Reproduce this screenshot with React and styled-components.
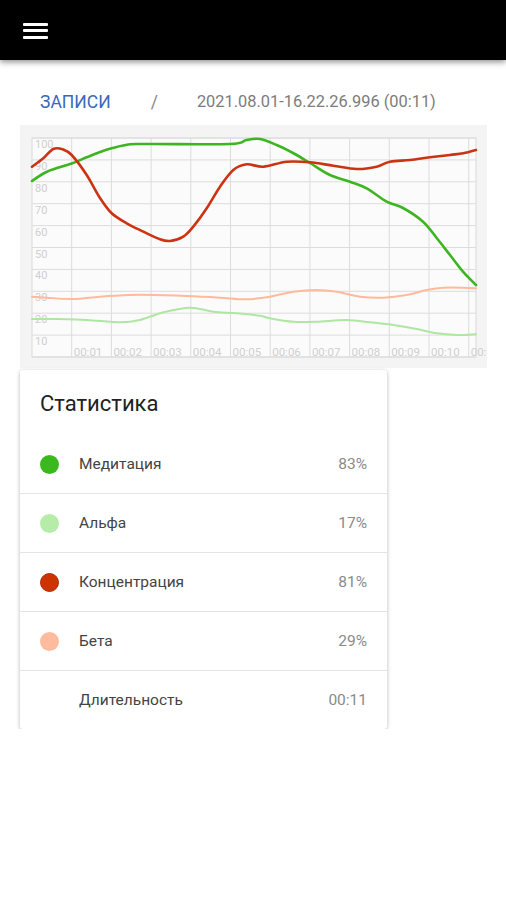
import React from "react"
import { styled, createGlobalStyle } from "styled-components"

const GlobalStyle = createGlobalStyle`
  body {
    margin: 0;
    background: #fff;
    font-family: Roboto, "Liberation Sans", sans-serif;
  }
`

// chart series, page coordinates
const series = [
  {
    color: "#ffb99b",
    width: 2,
    points: [[32,296.7],[46.7,297.7],[73.3,299],[100,296.7],[130,295],[153.3,295],[186.7,296],[220,297.7],[246.7,299.3],[270,296.7],[293.3,291.7],[316.7,290],[336.7,291.7],[360,296.7],[383.3,297.7],[406.7,295],[426.7,290],[443.3,287.7],[463.3,287.7],[476,288.3]],
  },
  {
    color: "#aee6a2",
    width: 2,
    points: [[32,319],[53.3,319],[86.7,320],[120,322.3],[140,320],[163.3,312.3],[190,307.7],[213.3,311.7],[236.7,313.3],[260,315.7],[270,318.3],[293.3,321.7],[316.7,321.7],[346.7,320],[370,322.3],[393.3,325],[416.7,329],[436.7,333.3],[456.7,335],[476,334.3]],
  },
  {
    color: "#3db521",
    width: 2.6,
    points: [[32,181],[47,171.7],[71.7,163.5],[86.7,157.3],[100,152],[111.7,148.3],[130,144.3],[150,144],[230,144],[246.7,140],[260,139],[276.7,145],[293,153],[310,163],[330,175],[350,181.7],[366.7,188.3],[386.7,201.7],[403,208],[423,221.7],[436.7,238],[450,255],[463,271.7],[476,285]],
  },
  {
    color: "#cc3311",
    width: 2.6,
    points: [[32,166.7],[43.3,158.3],[53.3,149],[63.3,149.5],[71.7,155],[86.7,175],[100,198],[111.7,213.3],[126.7,223.3],[143.3,231.7],[160,239.3],[170,241],[183.3,236.7],[193.3,226.7],[206.7,208.3],[220,186.7],[233.3,170],[246.7,164.3],[263.3,166.7],[286.7,161.7],[310,162.3],[333.3,165.7],[356.7,169],[376.7,166.7],[390,161.7],[410,160],[430,157.3],[450,155],[463.3,153.3],[476,150]],
  },
]

const stats = [
  { label: "Медитация", value: "83%", color: "#3cb81f" },
  { label: "Альфа", value: "17%", color: "#b5eca8" },
  { label: "Концентрация", value: "81%", color: "#cc3300", border: "#b02a08" },
  { label: "Бета", value: "29%", color: "#ffbb9d" },
  { label: "Длительность", value: "00:11" },
]

// catmull-rom -> cubic bezier
const smoothPath = (pts) => {
  let d = `M${pts[0][0]},${pts[0][1]}`
  for (let i = 0; i < pts.length - 1; i++) {
    const p0 = pts[i - 1] || pts[i]
    const p1 = pts[i]
    const p2 = pts[i + 1]
    const p3 = pts[i + 2] || p2
    const c1x = p1[0] + (p2[0] - p0[0]) / 6
    const c1y = p1[1] + (p2[1] - p0[1]) / 6
    const c2x = p2[0] - (p3[0] - p1[0]) / 6
    const c2y = p2[1] - (p3[1] - p1[1]) / 6
    d += ` C${c1x.toFixed(1)},${c1y.toFixed(1)} ${c2x.toFixed(1)},${c2y.toFixed(1)} ${p2[0]},${p2[1]}`
  }
  return d
}

const PLOT = { left: 32, top: 138, right: 476, bottom: 357 }
const COL = 39.7
const ROW = (PLOT.bottom - PLOT.top) / 10

const Chart = () => {
  const rows = []
  for (let i = 0; i <= 10; i++) rows.push(PLOT.top + i * ROW)
  const cols = []
  for (let i = 1; i <= 11; i++) cols.push(PLOT.left + i * COL)

  return (
    <svg width="467" height="243" viewBox="20 125 467 243">
      <rect x={PLOT.left} y={PLOT.top} width={PLOT.right - PLOT.left} height={PLOT.bottom - PLOT.top} fill="#fbfbfb" stroke="#d9d9d9" />
      {rows.map((y) => (
        <line key={y} x1={PLOT.left} x2={PLOT.right} y1={y} y2={y} stroke="#dcdcdc" strokeWidth="1" />
      ))}
      {cols.map((x) => (
        <line key={x} x1={x} x2={x} y1={PLOT.top} y2={PLOT.bottom} stroke="#dcdcdc" strokeWidth="1" />
      ))}
      {rows.slice(0, 10).map((y, i) => (
        <text key={i} x={PLOT.left + 3} y={y + 10} fontSize="11" fill="#cfcfcf" fontFamily="Roboto, sans-serif">
          {100 - i * 10}
        </text>
      ))}
      {cols.map((x, i) => (
        <text key={i} x={x + 2} y={PLOT.bottom - 1} fontSize="11.5" fill="#cfcfcf" fontFamily="Roboto, sans-serif">
          {`00:${String(i + 1).padStart(2, "0")}`}
        </text>
      ))}
      {series.map((s, i) => (
        <path key={i} d={smoothPath(s.points)} fill="none" stroke={s.color} strokeWidth={s.width} strokeLinejoin="round" strokeLinecap="round" />
      ))}
    </svg>
  )
}

const App = () => {
  return (
    <>
      <GlobalStyle />
      <Header>
        <MenuButton>
          <Bar />
          <Bar />
          <Bar />
        </MenuButton>
      </Header>

      <Breadcrumbs>
        <Crumb href="#">Записи</Crumb>
        <Slash>/</Slash>
        <Current>2021.08.01-16.22.26.996 (00:11)</Current>
      </Breadcrumbs>

      <ChartPanel>
        <Chart />
      </ChartPanel>

      <Card>
        <CardTitle>Статистика</CardTitle>
        {stats.map((s) => (
          <StatRow key={s.label}>
            <Dot color={s.color} border={s.border} />
            <StatLabel>{s.label}</StatLabel>
            <StatValue>{s.value}</StatValue>
          </StatRow>
        ))}
      </Card>
    </>
  )
}

const Header = styled.header`
  height: 60px;
  background: #000;
  display: flex;
  align-items: center;
  padding-left: 23px;
  box-shadow: 0 2px 6px rgba(0, 0, 0, 0.45);
  position: relative;
  z-index: 1;
`

const MenuButton = styled.div`
  display: flex;
  flex-direction: column;
  gap: 3.5px;
  width: 25px;
  margin-top: 1px;
`

const Bar = styled.span`
  display: block;
  height: 3px;
  background: #fff;
  border-radius: 1px;
`

const Breadcrumbs = styled.nav`
  display: flex;
  align-items: center;
  height: 24px;
  padding: 30px 0 11px 40px;
  font-size: 17.5px;
  line-height: 24px;
`

const Crumb = styled.a`
  color: #3b68b8;
  text-transform: uppercase;
  text-decoration: none;
`

const Slash = styled.span`
  color: #888;
  margin: 0 39px 0 40px;
`

const Current = styled.span`
  color: #7c7c7c;
  font-size: 16.4px;
`

const ChartPanel = styled.div`
  width: 467px;
  height: 243px;
  margin-left: 20px;
  background: #f4f4f4;

  svg {
    display: block;
  }
`

const Card = styled.section`
  width: 367px;
  margin: 2px 0 0 20px;
  background: #fff;
  border-radius: 3px;
  box-shadow: 0 1px 4px rgba(0, 0, 0, 0.28);
`

const CardTitle = styled.h2`
  margin: 0;
  height: 65px;
  padding: 2px 20px 0;
  box-sizing: border-box;
  display: flex;
  align-items: center;
  font-size: 22px;
  font-weight: 400;
  color: #222;
`

const StatRow = styled.div`
  display: flex;
  align-items: center;
  height: 58px;
  padding: 0 20px;
  & + & {
    border-top: 1px solid #e4e4e4;
  }
`

const Dot = styled.span`
  width: 19px;
  height: 19px;
  border-radius: 50%;
  flex-shrink: 0;
  box-sizing: border-box;
  background: ${({ color }) => color || "transparent"};
  border: ${({ border }) => (border ? `1.5px solid ${border}` : "none")};
`

const StatLabel = styled.span`
  flex: 1;
  margin-left: 20px;
  font-size: 15.5px;
  color: #444;
`

const StatValue = styled.span`
  font-size: 15.5px;
  color: #8a8a8a;
`

export default App
